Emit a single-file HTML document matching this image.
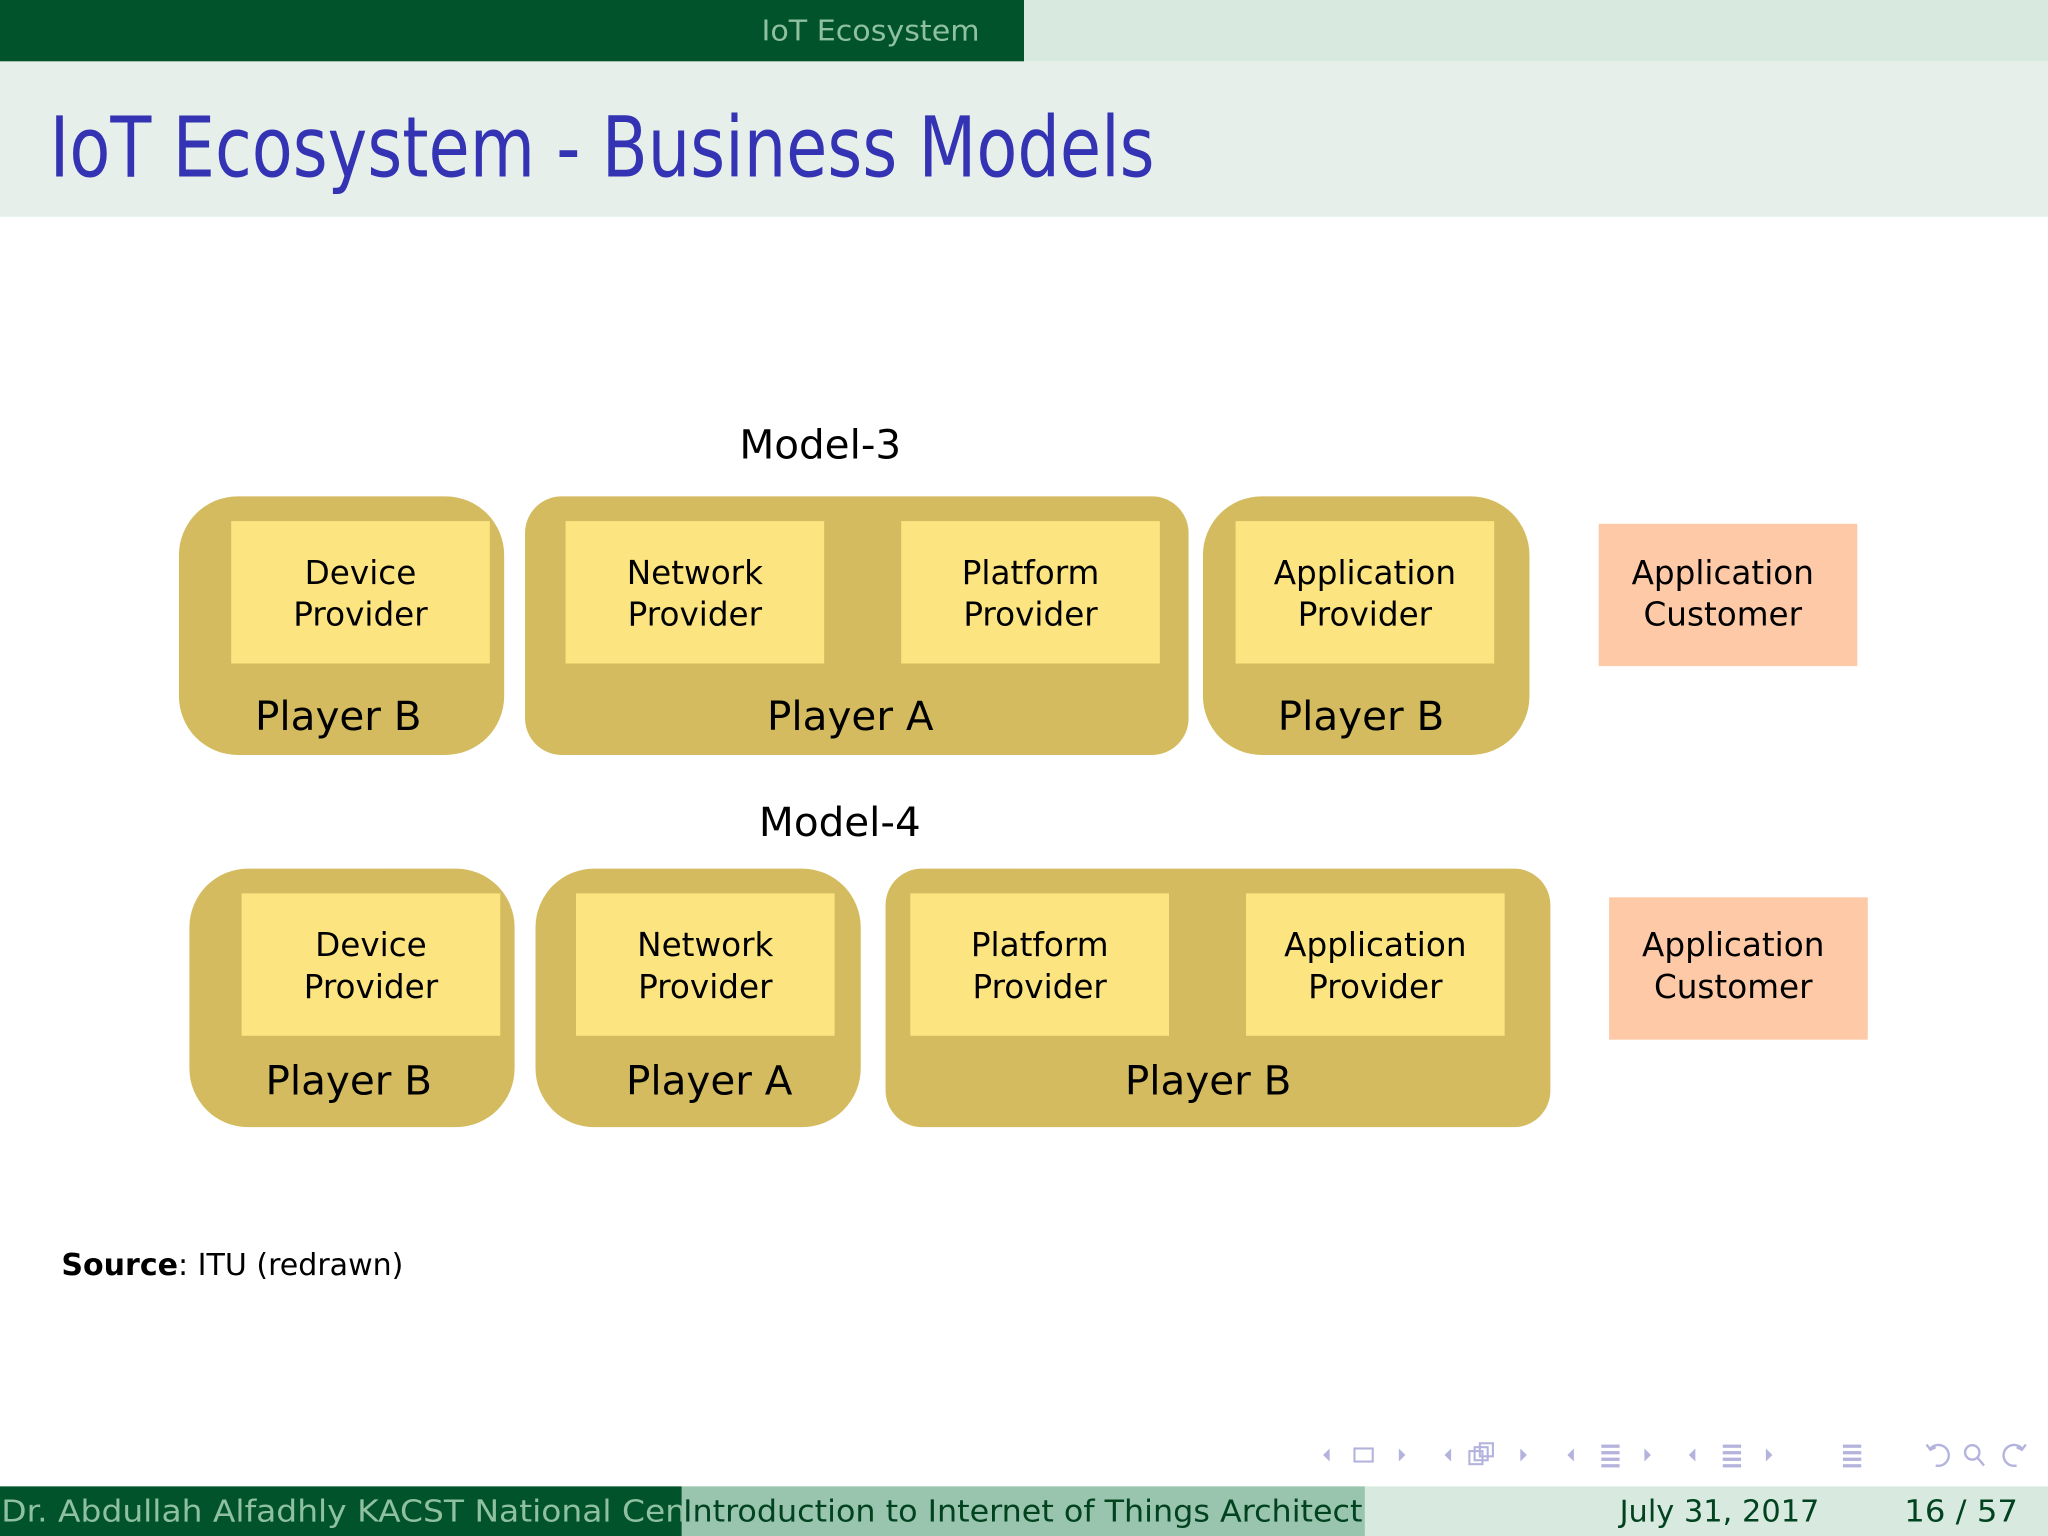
<!DOCTYPE html>
<html><head><meta charset="utf-8"><style>
html,body{margin:0;padding:0;background:#fff;}
svg{display:block;}
text{font-family:"DejaVu Sans","Liberation Sans",sans-serif;}
</style></head><body>
<svg width="2048" height="1536" viewBox="0 0 1568 1176" xmlns="http://www.w3.org/2000/svg">
<rect width="1568" height="1176" fill="#fff"/>
<!-- top bar -->
<rect x="0" y="0" width="784" height="47" fill="#01532b"/>
<rect x="784" y="0" width="784" height="47" fill="#d8eae0"/>
<text x="583" y="31" font-size="22" fill="#8fc09f" textLength="167" lengthAdjust="spacingAndGlyphs">IoT Ecosystem</text>
<!-- title band -->
<rect x="0" y="47" width="1568" height="119" fill="#e6efea"/>
<text x="38" y="135" font-size="64" fill="#3333b3" textLength="846" lengthAdjust="spacingAndGlyphs">IoT Ecosystem - Business Models</text>

<g fill="#000" text-anchor="middle">
<text x="628" y="351" font-size="31">Model-3</text>
<text x="643" y="640" font-size="31">Model-4</text>
</g>

<!-- Row 1 -->
<g fill="#d4bb5f">
<rect x="137" y="380" width="249" height="198" rx="45"/>
<rect x="402" y="380" width="508" height="198" rx="28"/>
<rect x="921" y="380" width="250" height="198" rx="45"/>
<rect x="145" y="665" width="249" height="198" rx="45"/>
<rect x="410" y="665" width="249" height="198" rx="45"/>
<rect x="678" y="665" width="509" height="198" rx="28"/>
</g>
<g fill="#fce581">
<rect x="177" y="399" width="198" height="109"/>
<rect x="433" y="399" width="198" height="109"/>
<rect x="690" y="399" width="198" height="109"/>
<rect x="946" y="399" width="198" height="109"/>
<rect x="185" y="684" width="198" height="109"/>
<rect x="441" y="684" width="198" height="109"/>
<rect x="697" y="684" width="198" height="109"/>
<rect x="954" y="684" width="198" height="109"/>
</g>
<g fill="#fdc9a6">
<rect x="1224" y="401" width="198" height="109"/>
<rect x="1232" y="687" width="198" height="109"/>
</g>
<g fill="#000" text-anchor="middle" font-size="25">
<text x="276" y="447">Device</text><text x="276" y="479">Provider</text>
<text x="532" y="447">Network</text><text x="532" y="479">Provider</text>
<text x="789" y="447">Platform</text><text x="789" y="479">Provider</text>
<text x="1045" y="447">Application</text><text x="1045" y="479">Provider</text>
<text x="1319" y="447">Application</text><text x="1319" y="479">Customer</text>
<text x="284" y="732">Device</text><text x="284" y="764">Provider</text>
<text x="540" y="732">Network</text><text x="540" y="764">Provider</text>
<text x="796" y="732">Platform</text><text x="796" y="764">Provider</text>
<text x="1053" y="732">Application</text><text x="1053" y="764">Provider</text>
<text x="1327" y="732">Application</text><text x="1327" y="764">Customer</text>
</g>
<g fill="#000" text-anchor="middle" font-size="31">
<text x="259" y="559">Player B</text>
<text x="651" y="559">Player A</text>
<text x="1042" y="559">Player B</text>
<text x="267" y="838">Player B</text>
<text x="543" y="838">Player A</text>
<text x="925" y="838">Player B</text>
</g>

<text x="47" y="976" font-size="23" fill="#000"><tspan font-weight="bold">Source</tspan>:  ITU (redrawn)</text>

<!-- nav icons -->
<g fill="#b3b3dd" stroke="none">
<path d="M1018 1109 l-5 5 l5 5z"/>
<rect x="1037" y="1109" width="14" height="10" fill="none" stroke="#b3b3dd" stroke-width="1.6"/>
<path d="M1071 1109 l5 5 l-5 5z"/>
<path d="M1111 1109 l-5 5 l5 5z"/>
<g fill="none" stroke="#b3b3dd" stroke-width="1.6">
<rect x="1125" y="1111" width="10" height="10"/><rect x="1129" y="1108" width="10" height="10"/><rect x="1133" y="1105" width="10" height="10"/>
</g>
<path d="M1164 1109 l5 5 l-5 5z"/>
<path d="M1205 1109 l-5 5 l5 5z"/>
<rect x="1226" y="1106" width="14" height="2.5"/><rect x="1226" y="1111" width="14" height="2.5"/><rect x="1226" y="1116" width="14" height="2.5"/><rect x="1226" y="1121" width="14" height="2.5"/>
<path d="M1259 1109 l5 5 l-5 5z"/>
<path d="M1298 1109 l-5 5 l5 5z"/>
<rect x="1319" y="1106" width="14" height="2.5"/><rect x="1319" y="1111" width="14" height="2.5"/><rect x="1319" y="1116" width="14" height="2.5"/><rect x="1319" y="1121" width="14" height="2.5"/>
<path d="M1352 1109 l5 5 l-5 5z"/>
<rect x="1411" y="1106" width="14" height="2.5"/><rect x="1411" y="1111" width="14" height="2.5"/><rect x="1411" y="1116" width="14" height="2.5"/><rect x="1411" y="1121" width="14" height="2.5"/>
<g fill="none" stroke="#b3b3dd" stroke-width="1.8">
<path d="M1478 1109 a8 8 0 1 1 4 13"/><path d="M1475 1106 l3 4 l4 -2"/>
<circle cx="1510" cy="1112" r="5.5"/><path d="M1514 1116 l5 6"/>
<path d="M1548 1109 a8 8 0 1 0 -4 13"/><path d="M1551 1106 l-3 4 l-4 -2"/>
</g>
</g>

<!-- footer -->
<rect x="0" y="1138" width="522" height="38" fill="#01532b"/>
<rect x="522" y="1138" width="523" height="38" fill="#99c4ad"/>
<rect x="1045" y="1138" width="523" height="38" fill="#d8eae0"/>
<svg x="0" y="1138" width="522" height="38"><text x="1" y="27" font-size="23" fill="#8fc09f" textLength="560" lengthAdjust="spacingAndGlyphs">Dr. Abdullah Alfadhly  KACST  National Center</text></svg>
<svg x="522" y="1138" width="523" height="38"><text x="1" y="27" font-size="23" fill="#01421f" textLength="560" lengthAdjust="spacingAndGlyphs">Introduction to Internet of Things Architecture</text></svg>
<text x="1240" y="1165" font-size="23" fill="#01421f" textLength="153" lengthAdjust="spacingAndGlyphs">July 31, 2017</text>
<text x="1458" y="1165" font-size="23" fill="#01421f" textLength="87" lengthAdjust="spacingAndGlyphs">16 / 57</text>
</svg>
</body></html>
